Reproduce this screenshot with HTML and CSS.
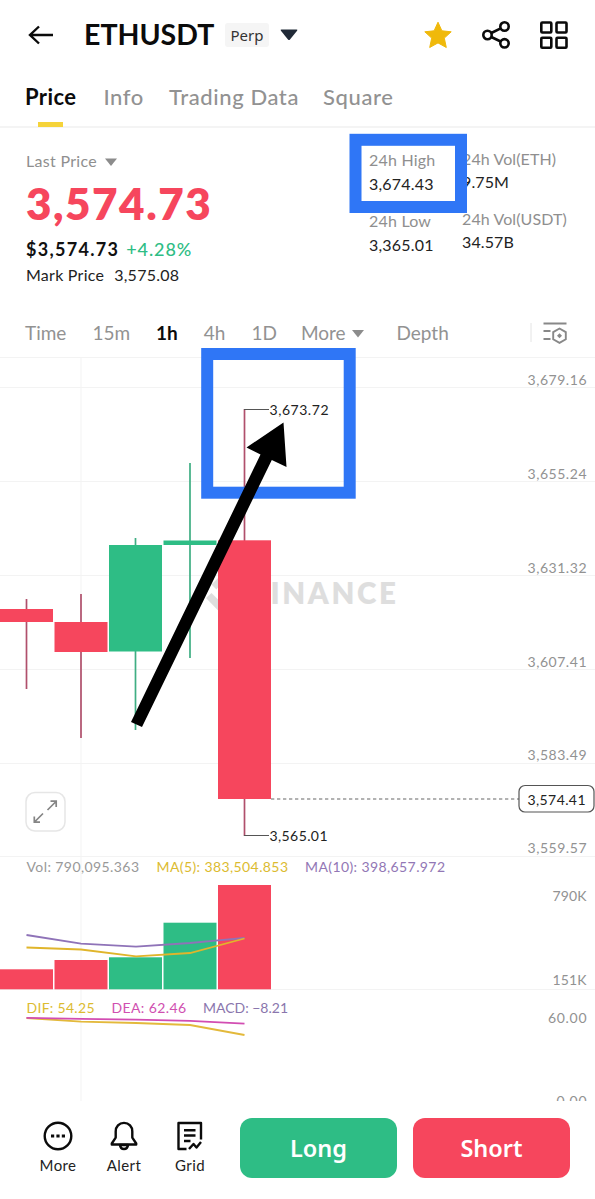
FILE: index.html
```
<!DOCTYPE html>
<html lang="en">
<head>
    <meta charset="UTF-8">
    <title>ETHUSDT Perp</title>
    <link rel="stylesheet" href="styles.css">
</head>
<body>
    <div class="app">
        <header class="header">
            <svg class="back" width="28" height="24" viewBox="0 0 28 24"><path d="M26 12H3M12 3.5L3 12l9 8.5"/></svg>
            <h1>ETHUSDT</h1>
            <span class="badge">Perp</span>
            <svg class="caret" width="18" height="12" viewBox="0 0 18 12"><path d="M1.5 0.5h15q1.5 0 .6 1.3L10 10.600q-1 1-2 0L.9 1.800Q0 .5 1.500 .5z" fill="#202a37"/></svg>
            <div class="actions">
                <svg width="30" height="30" viewBox="0 0 30 30"><path d="M15 2.200l3.900 8.600 9.300 1-6.900 6.300 2 9.400-8.300-4.600-8.300 4.600 2-9.400-6.900-6.300 9.300-1z" fill="#f0b90b" stroke="#f0b90b" stroke-width="1" stroke-linejoin="round"/></svg>
                <svg width="30" height="30" viewBox="0 0 30 30" fill="none" stroke="#0b0b0b" stroke-width="2.600">
                    <circle cx="6.500" cy="15" r="4.200"/><circle cx="23.500" cy="6.500" r="4.200"/><circle cx="23.500" cy="23.300" r="4.200"/>
                    <path d="M10.300 13l9.400-4.700M10.300 17l9.400 4.500"/>
                </svg>
                <svg width="30" height="30" viewBox="0 0 30 30" fill="none" stroke="#0b0b0b" stroke-width="2.600">
                    <rect x="2.300" y="2.500" width="10" height="10" rx="1"/><rect x="17.500" y="2.500" width="10" height="10" rx="1"/>
                    <rect x="2.300" y="17.700" width="10" height="10" rx="1"/><rect x="17.500" y="17.700" width="10" height="10" rx="1"/>
                </svg>
            </div>
        </header>

        <nav class="tabs">
            <a class="active">Price</a>
            <a>Info</a>
            <a>Trading Data</a>
            <a>Square</a>
        </nav>

        <section class="quote">
            <div class="quote-main">
                <div class="label">Last Price <svg width="12" height="8" viewBox="0 0 12 8"><path d="M0 .5h12L6 8z" fill="#8c8c8c"/></svg></div>
                <div class="price">3,574.73</div>
                <div class="fiat"><b>$3,574.73</b><span class="change">+4.28%</span></div>
                <div class="mark"><span>Mark Price</span><span>3,575.08</span></div>
            </div>
            <dl class="stats stats-price">
                <dt>24h High</dt><dd>3,674.43</dd>
                <dt>24h Low</dt><dd>3,365.01</dd>
            </dl>
            <dl class="stats stats-vol">
                <dt>24h Vol(ETH)</dt><dd>9.75M</dd>
                <dt>24h Vol(USDT)</dt><dd>34.57B</dd>
            </dl>
        </section>

        <div class="intervals">
            <span>Time</span>
            <span>15m</span>
            <span class="active">1h</span>
            <span>4h</span>
            <span>1D</span>
            <span class="more">More <svg width="12" height="8" viewBox="0 0 12 8"><path d="M0 0h12L6 7.500z" fill="#8c8c8c"/></svg></span>
            <span>Depth</span>
            <svg class="settings" width="38" height="24" viewBox="0 0 38 24" fill="none">
                <path d="M1 2v19" stroke="#e4e4e4"/>
                <path d="M13.500 2.500h23M13.500 10h7M13.500 18h7" stroke="#888" stroke-width="1.900"/>
                <path d="M29.500 7.500l6.300 3.600v7.200l-6.300 3.600-6.300-3.600v-7.200z" stroke="#888" stroke-width="1.900"/>
                <path d="M29.500 12.200l2.500 2.500-2.500 2.500-2.500-2.500z" fill="#888"/>
            </svg>
        </div>

        <svg class="chart" width="595" height="744" viewBox="0 357 595 744">
            <!-- grid -->
            <path class="grid" d="M0 357.500H595M0 387.500H595M0 481.500H595M0 575.500H595M0 669.500H595M0 763.500H595M0 856.500H595M0 989.500H595M81 357V1101"/>

            <!-- watermark -->
            <g fill="#dedede">
                <path d="M225 578l17 0-8-7.500-8.500 0-14 14 5 5zM206 598l5.500-5 16 16-5.500 5.500z"/>
                <text class="watermark" x="248" y="604" textLength="148">BINANCE</text>
            </g>

            <!-- candles -->
            <path class="wick-down" d="M26.500 599V689M81 594V738M244.500 409V836"/>
            <path class="wick-up" d="M135.500 538V730M190 463V658"/>
            <g class="down">
                <rect x="0" y="609" width="53" height="13"/>
                <rect x="54.500" y="622" width="53" height="30"/>
                <rect x="218" y="540.300" width="53" height="258.700"/>
            </g>
            <g class="up">
                <rect x="109" y="545" width="53" height="106.500"/>
                <rect x="163.500" y="540.500" width="53" height="4.500"/>
            </g>
            <path d="M244 409.500H269M244 835.500H269" stroke="#555"/>
            <g class="tip">
                <text x="269.500" y="414.500" textLength="59">3,673.72</text>
                <text x="269.500" y="840.500" textLength="58">3,565.01</text>
            </g>

            <!-- current price -->
            <path d="M271 799H519" stroke="#666" stroke-width="1.200" stroke-dasharray="3.300 2.700"/>
            <rect x="519" y="785.500" width="75" height="26.500" rx="6" fill="#fff" stroke="#555" stroke-width="1.200"/>
            <text class="tip" x="527.500" y="804.500" textLength="58">3,574.41</text>

            <g class="axis">
                <text x="527.500" y="385" textLength="59">3,679.16</text>
                <text x="527.500" y="479" textLength="59">3,655.24</text>
                <text x="527.500" y="572.500" textLength="59">3,631.32</text>
                <text x="527.500" y="666.500" textLength="59">3,607.41</text>
                <text x="527.500" y="760" textLength="59">3,583.49</text>
                <text x="527.500" y="852.500" textLength="59">3,559.57</text>
                <text x="552.500" y="900.500" textLength="34">790K</text>
                <text x="552.500" y="984.500" textLength="34">151K</text>
                <text x="548" y="1022.500" textLength="38.500">60.00</text>
                <text x="556.500" y="1105.500" textLength="30">0.00</text>
            </g>

            <!-- fullscreen button -->
            <rect x="26" y="792.500" width="39" height="38.500" rx="9" fill="#fff" stroke="#e6e6e6" stroke-width="1.500"/>
            <path d="M47.500 810l8.500-8.500M50.500 801.200h5.700v5.700M43 813.500l-8.500 8.500M34.300 816.500v5.700h5.700" fill="none" stroke="#858585" stroke-width="1.700"/>

            <!-- volume -->
            <g class="legend">
                <text x="26.500" y="872" textLength="112.500" fill="#999">Vol: 790,095.363</text>
                <text x="156.500" y="872" textLength="131.500" fill="#dcbb30">MA(5): 383,504.853</text>
                <text x="305" y="872" textLength="140" fill="#9277b5">MA(10): 398,657.972</text>
            </g>
            <g class="down">
                <rect x="0" y="969.300" width="53" height="20"/>
                <rect x="54.500" y="960" width="53" height="29.300"/>
                <rect x="218" y="885" width="53" height="104.300"/>
            </g>
            <g class="up">
                <rect x="109" y="957.300" width="53" height="32"/>
                <rect x="163.500" y="922.700" width="53" height="66.600"/>
            </g>
            <g class="line">
                <polyline stroke="#8f73b8" points="26.500,935 81,943.700 136,946.700 190,943 218,940.300 244.500,938"/>
                <polyline stroke="#e0b52b" points="26.500,947.500 81,949.500 136,956.300 190,953 244.500,938.500"/>
            </g>

            <!-- macd -->
            <g class="legend">
                <text x="26.500" y="1012.500" textLength="68" fill="#dcbb30">DIF: 54.25</text>
                <text x="111.500" y="1012.500" textLength="74.500" fill="#d050b0">DEA: 62.46</text>
                <text x="203" y="1012.500" textLength="85" fill="#8a76ad">MACD: −8.21</text>
            </g>
            <g class="line">
                <polyline stroke="#e3b93b" points="26.500,1018 81,1021.700 136,1023 190,1025 244.500,1035"/>
                <polyline stroke="#d24db2" points="26.500,1017.800 81,1018.800 136,1019.600 190,1020.800 244.500,1023.700"/>
            </g>
        </svg>

        <footer class="footer">
            <div class="tool">
                <svg width="30" height="30" viewBox="0 0 30 30" fill="none" stroke="#0b0b0b" stroke-width="2.400"><circle cx="15" cy="15" r="13.300"/><path d="M8 15h3.200M13.400 15h3.200M18.800 15H22" stroke-width="3.200"/></svg>
                <span>More</span>
            </div>
            <div class="tool">
                <svg width="30" height="30" viewBox="0 0 30 30" fill="none" stroke="#0b0b0b" stroke-width="2.400" stroke-linejoin="round"><path d="M15 1.900c-5 0-8.300 3.700-8.300 8.500v6.200L2.800 22.500v1h24.400v-1l-3.900-5.900v-6.200c0-4.800-3.300-8.500-8.300-8.500z"/><path d="M11 24c.3 2.800 2 4 4 4s3.700-1.200 4-4z"/></svg>
                <span>Alert</span>
            </div>
            <div class="tool">
                <svg width="30" height="30" viewBox="0 0 30 30" fill="none" stroke="#0b0b0b" stroke-width="2.400" stroke-linejoin="round"><path d="M11.500 28H3.500V2H26v16.500M9 9.300h11.500M9 14.500h11.500M9 20h6.500M14 28l4.500-5 3 3.500 4.500-5.500"/></svg>
                <span>Grid</span>
            </div>
            <button class="btn long">Long</button>
            <button class="btn short">Short</button>
        </footer>

        <!-- highlight boxes and arrow drawn over the page -->
        <svg class="marks" width="595" height="1199" viewBox="0 0 595 1199">
            <g fill="none" stroke="#2f76f6" stroke-width="12">
                <rect x="355.500" y="139.800" width="105.500" height="67.200"/>
                <rect x="207.200" y="354" width="142.500" height="138.700"/>
            </g>
            <path d="M283.500 422.500L286.500 467 271.800 460 142 727 131 722 260.500 454.500 246.500 447.500z"/>
        </svg>
    </div>
</body>
</html>
```
FILE: styles.css
```
* {
    box-sizing: border-box;
}
body {
    margin: 0;
    background-color: #fff;
    color: #111;
    font-family: Lato, "Liberation Sans", sans-serif;
}
.app {
    position: relative;
    width: 595px;
    height: 1199px;
    overflow: hidden;
}
.header {
    display: flex;
    align-items: center;
    height: 70px;
    padding: 0 26px 0 27px;
}
.back {
    fill: none;
    stroke: #0b0b0b;
    stroke-width: 2.4;
}
h1 {
    margin: -2px 0 0 29px;
    width: 141px;
    font-size: 28.5px;
    line-height: 36px;
    font-weight: 700;
    color: #0b0b0b;
}
.badge {
    width: 44px;
    height: 24px;
    line-height: 25px;
    border-radius: 3px;
    background-color: #f5f5f5;
    font-family: "Noto Sans", sans-serif;
    font-size: 15px;
    text-align: center;
    color: #333;
}
.caret {
    margin-left: 11px;
}
.actions {
    display: flex;
    gap: 28px;
    margin-left: auto;
}
.tabs {
    display: flex;
    gap: 27px;
    height: 58px;
    padding-left: 25px;
    border-bottom: 2px solid #f4f4f4;
    font-size: 22px;
    line-height: 54px;
    font-weight: 500;
    letter-spacing: 0.6px;
    color: #929292;
}
.tabs a:nth-child(3) {
    margin-left: -2px;
}
.tabs a:nth-child(4) {
    margin-left: -3px;
}
.tabs .active {
    display: flex;
    flex-direction: column;
    align-items: center;
    justify-content: space-between;
    letter-spacing: 0.4px;
    font-weight: 700;
    color: #0b0b0b;
}
.tabs .active::after {
    content: "";
    width: 25px;
    height: 5px;
    background-color: #f5d33a;
    flex-shrink: 0;
    margin-top: -2px;
}
.quote {
    display: flex;
    height: 181px;
    padding-left: 26px;
}
.quote-main {
    width: 343px;
    padding-top: 23px;
}
.label {
    font-size: 16px;
    line-height: 20px;
    letter-spacing: 0.3px;
    color: #8f8f8f;
}
.label svg {
    margin: 0 0 1px 4px;
}
.price {
    margin-top: 9px;
    font-size: 44px;
    line-height: 46px;
    font-weight: 800;
    letter-spacing: 1.5px;
    color: #f6465d;
}
.fiat {
    margin-top: 11px;
    font-size: 18px;
    line-height: 24px;
    letter-spacing: 1.3px;
}
.fiat b {
    font-weight: 700;
}
.change {
    margin-left: 7px;
    color: #2ebd85;
    letter-spacing: 0.9px;
    font-weight: 500;
}
.mark {
    display: flex;
    gap: 10px;
    margin-top: 4px;
    font-size: 16px;
    line-height: 20px;
    letter-spacing: 0.25px;
    color: #222;
}
.stats {
    margin: 0;
    font-size: 16px;
    line-height: 24px;
    letter-spacing: 0.2px;
}
.stats-price {
    width: 93px;
    padding-top: 20px;
}
.stats-vol {
    padding-top: 19px;
    line-height: 23px;
    letter-spacing: 0.1px;
}
.stats dt {
    color: #8f8f8f;
}
.stats dd {
    margin: 0 0 13px;
    color: #222;
}
.stats-vol dd {
    margin-bottom: 14px;
}
.intervals {
    display: flex;
    align-items: center;
    gap: 26px;
    height: 48px;
    padding: 0 27px 0 25px;
    font-size: 19px;
    line-height: 24px;
    color: #929292;
}
.intervals .active {
    font-weight: 700;
    color: #0b0b0b;
}
.intervals .more {
    margin: 0 6px 0 -2px;
}
.intervals .more svg {
    margin: 0 0 2px 2px;
}
.settings {
    margin-left: auto;
}
.chart {
    display: block;
}
.grid {
    fill: none;
    stroke: #f3f3f3;
}
.watermark {
    font-size: 29.5px;
    font-weight: 800;
}
.wick-down {
    stroke: #b0506c;
    stroke-width: 1.7;
}
.wick-up {
    stroke: #3fae83;
    stroke-width: 1.7;
}
.down {
    fill: #f6465d;
}
.up {
    fill: #2ebd85;
}
.tip {
    font-size: 14px;
    fill: #222;
}
.axis {
    font-size: 14px;
    fill: #929292;
}
.legend {
    font-size: 14px;
}
.line {
    fill: none;
    stroke-width: 1.8;
}
.footer {
    display: flex;
    align-items: flex-start;
    height: 98px;
    padding: 17px 25px 0 25px;
}
.tool {
    display: flex;
    flex-direction: column;
    align-items: center;
    width: 66px;
    padding-top: 3px;
    font-size: 15px;
    line-height: 20px;
    letter-spacing: 0.4px;
    color: #222;
}
.tool span {
    margin-top: 4px;
}
.btn {
    width: 157px;
    height: 60px;
    padding: 0;
    border: none;
    border-radius: 12px;
    font-family: "Noto Sans", sans-serif;
    font-size: 23.5px;
    font-weight: 600;
    color: #fff;
}
.long {
    margin-left: 17px;
    background-color: #2ebd85;
}
.short {
    margin-left: 16px;
    background-color: #f6465d;
}
.marks {
    position: absolute;
    top: 0;
    left: 0;
}
```
